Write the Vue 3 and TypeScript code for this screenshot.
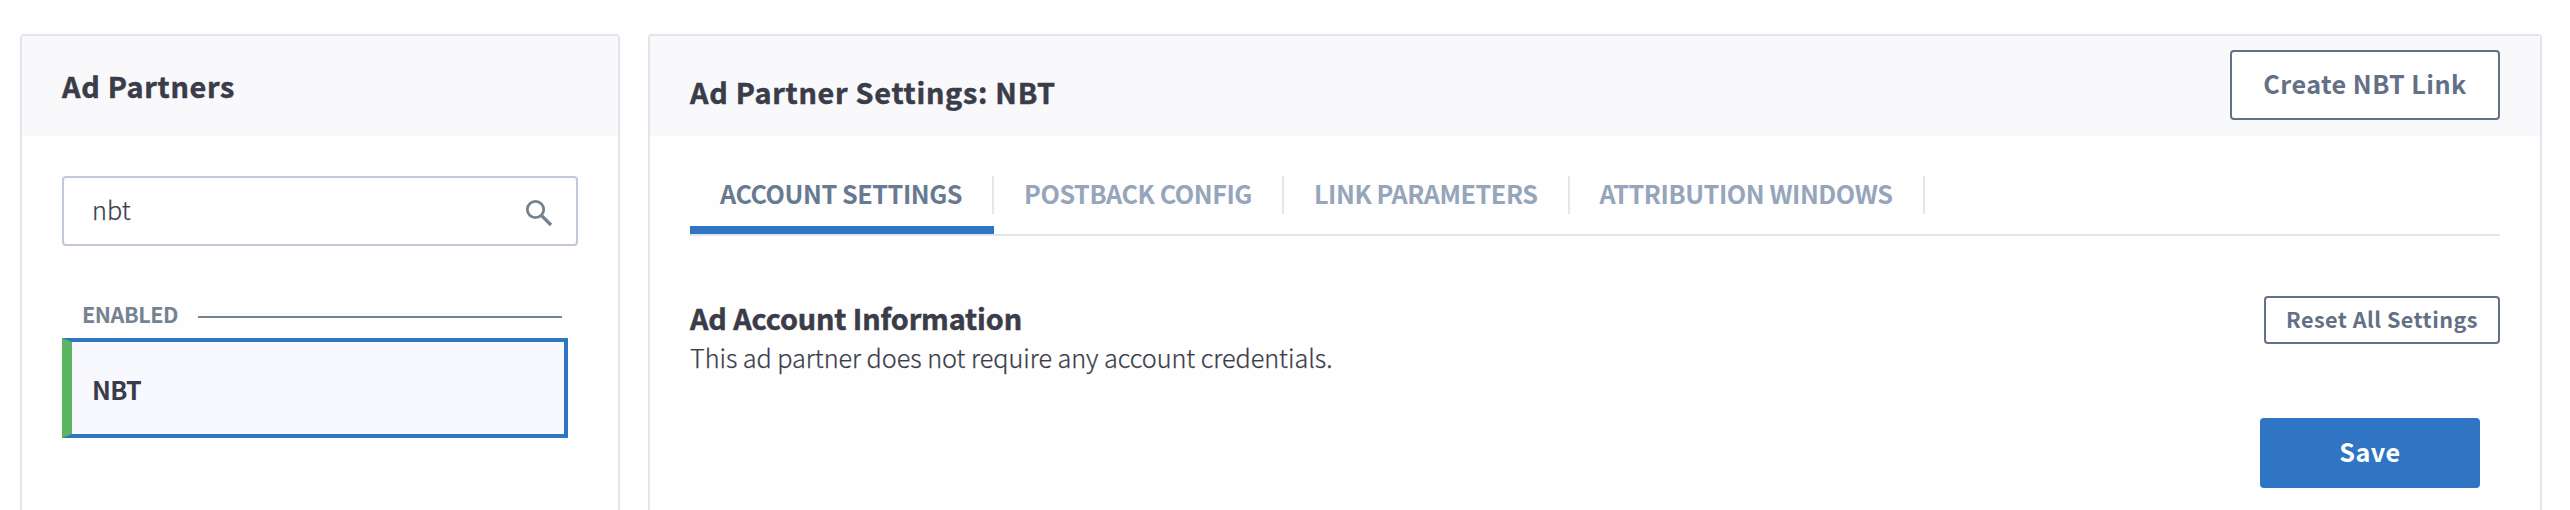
<script setup lang="ts">
import { ref } from 'vue'

const query = ref('nbt')
const partners = [{ name: 'NBT', selected: true }]
const tabs = ['Account Settings', 'Postback Config', 'Link Parameters', 'Attribution Windows']
const activeTab = ref(0)
</script>

<template>
  <div class="page">
    <aside class="panel sidebar">
      <header class="panel-head">
        <h2 class="title">Ad Partners</h2>
      </header>
      <div class="side-body">
        <div class="search">
          <span class="query">{{ query }}</span>
          <svg class="search-icon" viewBox="0 0 28 28" width="28" height="28">
            <circle cx="10.5" cy="10.5" r="8.2" fill="none" stroke="currentColor" stroke-width="2.8" />
            <path d="M16.6 16.6L26 26" fill="none" stroke="currentColor" stroke-width="3.4" />
          </svg>
        </div>
        <div class="group">
          <span class="group-name">ENABLED</span>
          <span class="rule"></span>
        </div>
        <div v-for="p in partners" :key="p.name" class="partner" :class="{ selected: p.selected }">
          <span>{{ p.name }}</span>
        </div>
      </div>
    </aside>

    <main class="panel settings">
      <header class="panel-head">
        <h2 class="title offset">Ad Partner Settings: NBT</h2>
        <button class="btn create">Create NBT Link</button>
      </header>
      <div class="main-body">
        <nav class="tabs">
          <a v-for="(t, i) in tabs" :key="t" class="tab" :class="{ active: i === activeTab }" @click="activeTab = i">
            <span class="tab-label">{{ t }}</span>
          </a>
        </nav>
        <section class="info">
          <div>
            <h3 class="info-title">Ad Account Information</h3>
            <p class="info-text">This ad partner does not require any account credentials.</p>
          </div>
          <button class="btn reset">Reset All Settings</button>
        </section>
        <div class="actions">
          <button class="btn save">Save</button>
        </div>
      </div>
    </main>
  </div>
</template>

<style>
body {
  margin: 0;
  background: #fff;
}
</style>

<style scoped>
.page,
.page * {
  box-sizing: border-box;
}
.page {
  display: flex;
  gap: 28px;
  height: 510px;
  padding: 34px 28px 0 20px;
  overflow: hidden;
  background: #fefefe;
  color: #3a3c49;
  font-family: "Noto Sans CJK SC", "Noto Sans", sans-serif;
  font-size: 25.2px;
}
.panel {
  height: 520px;
  border: 2px solid #e0e6eb;
  border-radius: 4px;
}
.sidebar {
  width: 600px;
  flex: none;
}
.settings {
  flex: 1;
}
.panel-head {
  display: flex;
  justify-content: space-between;
  align-items: flex-start;
  height: 100px;
  padding: 14px 40px 0;
  background: #f9f9fc;
}
.title {
  margin: 15px 0 0;
  font-size: 28.8px;
  line-height: 42px;
  font-weight: 700;
  letter-spacing: 0.73px;
  -webkit-text-stroke: 0.5px currentColor;
}
.title.offset {
  margin-top: 21px;
}
.side-body,
.main-body {
  padding: 40px 40px 0;
}
.search {
  display: flex;
  justify-content: space-between;
  align-items: center;
  height: 70px;
  padding: 0 23px 0 28px;
  border: 2px solid #c1cad7;
  border-radius: 4px;
  background: #fff;
}
.query {
  font-weight: 300;
  line-height: 40px;
  margin-bottom: 4px;
  -webkit-text-stroke: 0.25px currentColor;
}
.search-icon {
  margin-top: 4px;
  color: #758290;
}
.group {
  display: flex;
  align-items: center;
  gap: 20px;
  height: 32px;
  margin: 54px 16px 6px 20px;
  color: #758290;
}
.group-name {
  font-size: 21.6px;
  line-height: 32px;
  font-weight: 700;
  letter-spacing: -0.45px;
  margin-top: -4px;
}
.rule {
  flex: 1;
  height: 2px;
  margin-top: 2px;
  background: #758290;
}
.partner {
  display: flex;
  align-items: center;
  height: 100px;
  margin-right: 10px;
  padding: 1px 20px 0;
  font-weight: 700;
  letter-spacing: -0.6px;
}
.partner.selected {
  border: 4px solid #3075c4;
  border-left: 10px solid #5ab661;
  background: #f8f9fe;
}
.tabs {
  display: flex;
  height: 60px;
  border-bottom: 2px solid #e0e6eb;
}
.tab {
  height: 58px;
  color: #95a5ba;
  font-weight: 700;
  letter-spacing: -0.44px;
  text-transform: uppercase;
  cursor: pointer;
}
.tab-label {
  display: block;
  height: 38px;
  padding: 0 30px;
  border-right: 2px solid #e0e6eb;
  line-height: 34px;
  white-space: nowrap;
}
.tab.active {
  border-bottom: 8px solid #3075c4;
  color: #687a92;
}
.info {
  display: flex;
  justify-content: space-between;
  align-items: flex-start;
  height: 122px;
  padding-top: 60px;
}
.info-title {
  margin: 0;
  font-size: 28.8px;
  line-height: 44px;
  font-weight: 700;
  letter-spacing: -0.12px;
  -webkit-text-stroke: 0.5px currentColor;
}
.info-text {
  margin: -3px 0 0;
  line-height: 40px;
  font-weight: 300;
  letter-spacing: -0.03px;
  white-space: nowrap;
  -webkit-text-stroke: 0.25px currentColor;
}
.btn {
  border: 2px solid #637085;
  border-radius: 4px;
  background: #fff;
  color: #637085;
  font-family: inherit;
  font-weight: 700;
  padding: 0;
  letter-spacing: 0.45px;
  white-space: nowrap;
}
.create {
  width: 270px;
  height: 70px;
  font-size: 25.2px;
  padding-bottom: 4px;
}
.reset {
  width: 236px;
  height: 48px;
  font-size: 21.6px;
  line-height: 40px;
  padding-bottom: 3px;
}
.actions {
  display: flex;
  justify-content: flex-end;
  padding: 60px 20px 0 0;
}
.save {
  width: 220px;
  height: 70px;
  padding-bottom: 4px;
  border-color: #3075c4;
  background: #3075c4;
  color: #fff;
  font-size: 25.2px;
}
</style>
